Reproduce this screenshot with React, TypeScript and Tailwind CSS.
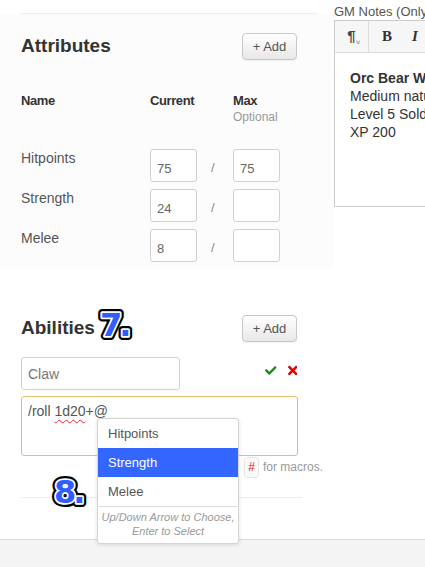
import { FaCheck, FaTimes } from "react-icons/fa";

const attributes = [
  { name: "Hitpoints", current: "75", max: "75" },
  { name: "Strength", current: "24", max: "" },
  { name: "Melee", current: "8", max: "" },
];

function StepBadge({ label, className }: { label: string; className: string }) {
  return (
    <svg viewBox="0 0 40 38" className={className} aria-hidden="true">
      {["#000", "#fff"].map((c, i) => (
        <text
          key={c}
          x="4"
          y="31"
          fontSize="32"
          fontWeight="900"
          fontFamily="DejaVu Sans, sans-serif"
          letterSpacing="-3"
          fill={c}
          stroke={c}
          strokeWidth={i === 0 ? 8 : 3.5}
          strokeLinejoin="round"
        >
          {label}
        </text>
      ))}
      <text x="4" y="31" fontSize="32" fontWeight="900" fontFamily="DejaVu Sans, sans-serif" letterSpacing="-3" fill="#2f5dff">
        {label}
      </text>
    </svg>
  );
}

function AddButton() {
  return (
    <button className="h-[27px] w-[55px] rounded-[4px] border border-[#c8c8c8] bg-gradient-to-b from-white to-[#e8e8e8] text-[13px] text-[#555] shadow-[0_1px_1px_rgba(0,0,0,0.05)]">
      + Add
    </button>
  );
}

function Box({ value }: { value: string }) {
  return (
    <input
      readOnly
      value={value}
      className="h-[33px] w-[47px] rounded-[3px] border border-[#d0d0d0] bg-white px-[6px] pt-[6px] text-[13px] text-[#666] outline-none"
    />
  );
}

export default function App() {
  return (
    <div className="relative h-[567px] w-[425px] overflow-hidden bg-white font-['Liberation_Sans',Arial,sans-serif] text-[#333]">
      <div className="flex">
        {/* left column */}
        <div className="w-[334px] shrink-0">
          <div className="pt-[13px]">
            <div className="ml-[21px] mr-[16px] border-t border-[#eeeeee]" />
          </div>

          <section className="bg-[#fcfcfc] pl-[21px] pr-[37px] pt-[19px] pb-[6px]">
            <div className="flex h-[27px] items-center justify-between">
              <h2 className="text-[19px] font-bold text-[#333]">Attributes</h2>
              <AddButton />
            </div>

            <div className="mt-[33px] flex text-[13px] font-bold leading-[16px] tracking-[-0.4px] text-[#333]">
              <div className="w-[129px]">Name</div>
              <div className="w-[83px]">Current</div>
              <div>
                <div>Max</div>
                <div className="mt-[1px] text-[12px] font-normal leading-[14px] tracking-normal text-[#999]">Optional</div>
              </div>
            </div>

            <div className="mt-[25px] flex flex-col gap-[7px]">
              {attributes.map((a) => (
                <div key={a.name} className="flex h-[33px]">
                  <div className="w-[129px] pt-[1px] text-[14px] leading-[16px] text-[#555]">{a.name}</div>
                  <Box value={a.current} />
                  <div className="w-[36px] pt-[9px] pl-[14px] text-[13px] text-[#888]">/</div>
                  <Box value={a.max} />
                </div>
              ))}
            </div>
          </section>

          <section className="pl-[21px] pr-[37px] pt-[47px]">
            <div className="flex h-[27px] items-center justify-between">
              <div className="relative">
                <h2 className="text-[19px] font-bold text-[#333]">Abilities</h2>
                <StepBadge label="7." className="absolute left-[75px] top-[-9px] h-[38px] w-[40px]" />
              </div>
              <AddButton />
            </div>

            <div className="mt-[15px] flex items-center">
              <input
                readOnly
                value="Claw"
                className="h-[33px] w-[159px] rounded-[3px] border border-[#cfcfcf] bg-white px-[6px] text-[14px] text-[#777] outline-none"
              />
              <FaCheck className="ml-[85px] mt-[-6px] h-[17px] w-[17px] text-[#1b8a1b]" />
              <FaTimes className="ml-[11px] mt-[-6px] h-[17px] w-[14px] text-[#e50000]" />
            </div>

            <div className="mt-[6px] h-[60px] w-[277px] rounded-[3px] border-[1.5px] border-[#e7bd6c] bg-white px-[6px] pt-[6px] text-[14px] leading-[16px] text-[#555]">
              /roll <span className="underline decoration-[#e23] decoration-wavy decoration-[1px] underline-offset-[3px]">1d20</span>+@
            </div>

            <div className="flex h-[22px] items-center whitespace-nowrap pl-[223px]">
              <span className="flex h-[21px] w-[15px] shrink-0 items-center justify-center rounded-[3px] border border-[#e6e6e6] bg-[#f9f9f9] text-[12px] text-[#d22]">
                #
              </span>
              <span className="ml-[4px] shrink-0 text-[12px] text-[#999]">for macros.</span>
            </div>

            <div className="mt-[19px] mr-[-5px] border-t border-[#eeeeee]" />
          </section>
        </div>

        {/* right column */}
        <div className="w-[260px] shrink-0">
          <div className="pt-[4px] text-[13px] leading-[16px] text-[#555]">GM Notes (Only visible to GMs)</div>
          <div className="h-[187px] border border-[#cccccc] bg-white">
            <div className="flex h-[32px] border-b border-[#dddddd] bg-[#f6f6f6]">
              <div className="relative flex w-[34px] items-center justify-center border-r border-[#dddddd] text-[15px] font-bold text-[#444]">
                ¶<span className="absolute left-[21px] top-[17px] text-[7px] text-[#999]">˅</span>
              </div>
              <div className="flex w-[36px] items-center justify-center font-['Liberation_Serif',serif] text-[15px] font-bold text-[#333]">B</div>
              <div className="flex w-[20px] items-center justify-center font-['Liberation_Serif',serif] text-[15px] font-bold italic text-[#333]">I</div>
            </div>
            <div className="px-[15px] pt-[16px] text-[14px] leading-[18px] text-[#333]">
              <div className="font-bold">Orc Bear Warrior</div>
              <div>Medium natural humanoid</div>
              <div>Level 5 Soldier</div>
              <div>XP 200</div>
            </div>
          </div>
        </div>
      </div>

      {/* footer */}
      <div className="absolute bottom-0 left-0 right-0 h-[28px] border-t border-[#dddddd] bg-[#f4f4f4]" />

      {/* autocomplete dropdown */}
      <div className="absolute left-[97px] top-[418px] w-[142px] overflow-hidden rounded-[3px] border border-[#d5d5d5] bg-white shadow-[0_1px_4px_rgba(0,0,0,0.12)]">
        {["Hitpoints", "Strength", "Melee"].map((n) => (
          <div
            key={n}
            className={`flex h-[29px] items-center pl-[10px] text-[13px] ${
              n === "Strength" ? "bg-[#3366ff] text-white" : "text-[#555]"
            }`}
          >
            {n}
          </div>
        ))}
        <div className="border-t border-[#dddddd] pt-[3px] pb-[5px] text-center text-[11px] italic leading-[14px] text-[#999]">
          Up/Down Arrow to Choose,
          <br />
          Enter to Select
        </div>
      </div>

      <StepBadge label="8." className="absolute left-[50px] top-[472px] h-[38px] w-[40px]" />
    </div>
  );
}
